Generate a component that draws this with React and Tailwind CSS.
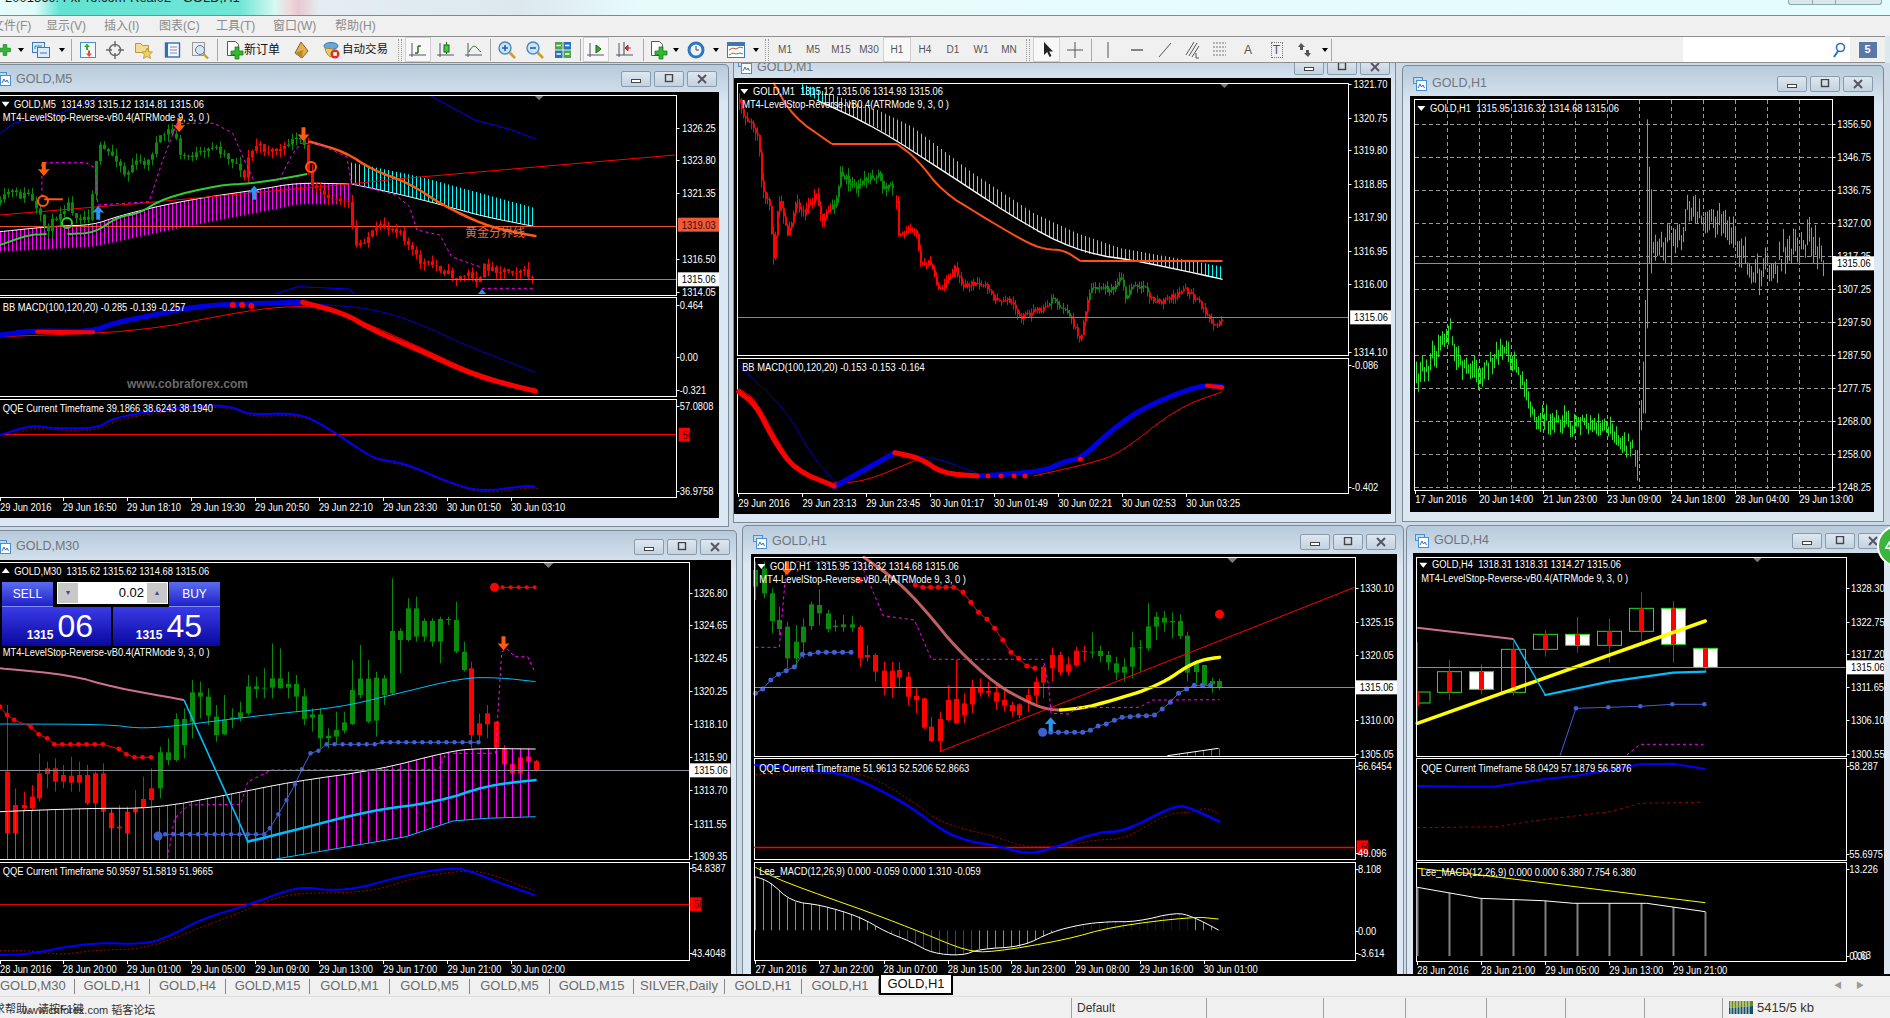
import React from "react";

const SANS = '"Liberation Sans", "Noto Sans CJK SC", Arial, sans-serif';

const rng = (seed) => {
  let s = seed;
  return () => {
    s = (s * 16807) % 2147483647;
    return s / 2147483647;
  };
};

const at = (pts, x) => {
  for (let i = 1; i < pts.length; i++) {
    if (x <= pts[i][0]) {
      const [a, b] = pts[i - 1];
      const [c, d] = pts[i];
      return c === a ? d : b + ((d - b) * (x - a)) / (c - a);
    }
  }
  return pts[pts.length - 1][1];
};

const chaikin = (pts, n = 2) => {
  let p = pts;
  for (let k = 0; k < n; k++) {
    const o = [p[0]];
    for (let i = 0; i < p.length - 1; i++) {
      const [a, b] = p[i];
      const [c, d] = p[i + 1];
      o.push([0.75 * a + 0.25 * c, 0.75 * b + 0.25 * d], [0.25 * a + 0.75 * c, 0.25 * b + 0.75 * d]);
    }
    o.push(p[p.length - 1]);
    p = o;
  }
  return p;
};

const genCandles = (keys, step, seed, noise, color) => {
  const r = rng(seed);
  const out = [];
  let prev = at(keys, keys[0][0]);
  for (let x = keys[0][0]; x <= keys[keys.length - 1][0]; x += step) {
    const c = at(keys, x) + (r() - 0.5) * noise;
    out.push([x, prev, c, Math.min(prev, c) - r() * noise, Math.max(prev, c) + r() * noise, color(x)]);
    prev = c;
  }
  return out;
};

// chart coordinates are taken off the reference crops, pen() maps them to page pixels
function pen(sx, ox, oy) {
  const m = ([x, y]) => [+(ox + x / sx).toFixed(1), +(oy + y / 3).toFixed(1)];
  const X = (x) => Math.round(ox + x / sx) + 0.5;
  const Y = (y) => oy + y / 3;
  const L = (pts, c, w = 1, dash) => (
    <polyline points={pts.map(m).join(" ")} fill="none" stroke={c} strokeWidth={w} strokeDasharray={dash} strokeLinejoin="round" strokeLinecap={w > 2 ? "round" : "butt"} />
  );
  const S = (pts, c, w = 1, dash) => L(chaikin(pts), c, w, dash);
  const Tx = (x, y, str, c = "#fff", s = 11, sc = 0.85) => (
    <text transform={`translate(${ox + x / sx} ${Y(y) + 4}) scale(${sc} 1)`} fill={c} fontSize={s} fontFamily={SANS} className="whitespace-pre">
      {str}
    </text>
  );
  const Frame = (x0, y0, x1, y1) => (
    <rect x={X(x0)} y={Math.round(Y(y0)) + 0.5} width={X(x1) - X(x0)} height={Math.round(Y(y1)) - Math.round(Y(y0))} fill="none" stroke="#fff" />
  );
  const Hl = (x0, x1, y, c, w = 1, dash) => (
    <line x1={ox + x0 / sx} x2={ox + x1 / sx} y1={Math.round(Y(y)) + 0.5} y2={Math.round(Y(y)) + 0.5} stroke={c} strokeWidth={w} strokeDasharray={dash} />
  );
  const Hist = (top, bottom, x0, x1, step, c, w = 1) => {
    const out = [];
    for (let x = x0, i = 0; x <= x1; x += step, i++) {
      const yb = typeof bottom === "number" ? bottom : at(bottom, x);
      out.push(<line key={i} x1={X(x)} x2={X(x)} y1={Y(at(top, x))} y2={Y(yb)} stroke={c} strokeWidth={w} />);
    }
    return out;
  };
  const Candles = (list, bw, color) =>
    list.map(([x, a, b, h, l, col], i) => {
      const c = color || col;
      const t = Math.min(a, b);
      const hgt = Math.max(Math.abs(a - b) / 3, 1);
      return (
        <g key={i}>
          <line x1={X(x)} x2={X(x)} y1={Y(h)} y2={Y(l)} stroke={c} />
          <rect x={Math.round(X(x) - bw / 2)} y={Y(t)} width={bw} height={hgt} fill={c} />
        </g>
      );
    });
  const Dots = (list, c, r = 2.5) => list.map((p, i) => <circle key={i} cx={m(p)[0]} cy={m(p)[1]} r={r} fill={c} />);
  const Arrow = (x, y, c, down) => {
    const [px, py] = m([x, y]);
    return (
      <path
        transform={`translate(${px} ${py}) scale(1 ${down ? -1 : 1})`}
        d="M0 -7 L6 0 L2 -0.5 L2 7 L-2 7 L-2 -0.5 L-6 0 Z"
        fill={c}
      />
    );
  };
  const Axis = (fx, tx, rows) =>
    rows.map(([y, s], i) => (
      <g key={i}>
        <line x1={X(fx)} x2={X(fx) + 3} y1={Math.round(Y(y)) + 0.5} y2={Math.round(Y(y)) + 0.5} stroke="#fff" />
        {Tx(tx, y, s)}
      </g>
    ));
  const Tag = (x0, x1, y, str, bg, c) => (
    <g>
      <rect x={ox + x0 / sx} y={Y(y) - 7} width={(x1 - x0) / sx} height={14} fill={bg} />
      {Tx(x0 + 4 * sx, y, str, c)}
    </g>
  );
  const Times = (xs, labels, fy, ty) =>
    xs.map((x, i) => (
      <g key={i}>
        <line x1={X(x)} x2={X(x)} y1={Math.round(Y(fy))} y2={Math.round(Y(fy)) + 4} stroke="#fff" />
        {Tx(x, ty, labels[i])}
      </g>
    ));
  const Tri = (x, y, c = "#fff", up) => {
    const [px, py] = m([x, y]);
    return <polygon points={up ? `${px - 4},${py + 2} ${px + 4},${py + 2} ${px},${py - 3}` : `${px - 4},${py - 2} ${px + 4},${py - 2} ${px},${py + 3}`} fill={c} />;
  };
  const Shift = (x, y) => {
    const [px, py] = m([x, y]);
    return <polygon points={`${px - 5},${py} ${px + 5},${py} ${px},${py + 5}`} fill="#777b80" />;
  };
  return { m, L, S, Tx, Frame, Hl, Hist, Candles, Dots, Arrow, Axis, Tag, Times, Tri, Shift, X, Y };
}

function ChartM5() {
  const p = pen(2.148, 0, 90);
  const keys = [[0, 340], [20, 300], [40, 320], [60, 310], [80, 370], [100, 420], [120, 380], [145, 340], [165, 380], [190, 380], [212, 170], [230, 185], [250, 205], [270, 260], [285, 220], [320, 215], [330, 170], [360, 120], [385, 150], [385, 200], [440, 190], [455, 165], [480, 190], [515, 230], [525, 270], [530, 210], [550, 165], [570, 180], [610, 180], [620, 155], [650, 150], [660, 210], [665, 270], [700, 310], [750, 345], [755, 400], [765, 470], [790, 440], [820, 410], [860, 420], [875, 460], [900, 515], [940, 530], [980, 565], [1010, 550], [1030, 580], [1040, 530], [1070, 540], [1120, 540], [1150, 572]];
  const col = (x) => (x < 518 ? "#0a8a0a" : x < 615 ? "#ff0000" : x < 655 ? "#0a8a0a" : "#ff0000");
  const blue = [[0, 735], [70, 722], [200, 725], [240, 700], [330, 675], [420, 650], [500, 642], [650, 637]];
  const qq = [[0, 1035], [70, 1005], [110, 1015], [210, 1015], [240, 985], [340, 960], [440, 945], [500, 950], [535, 975], [640, 968], [700, 1010], [780, 1085], [810, 1108], [870, 1120], [960, 1175], [1030, 1205], [1130, 1187], [1150, 1190]];
  return (
    <>
      {p.L([[0, 130], [30, 100], [130, 70], [215, 20]], "#0000ff")}
      {p.L([[925, 18], [1020, 90], [1100, 120], [1150, 147]], "#0000ff")}
      {p.Hist([[0, 425], [120, 408], [200, 405], [250, 380], [350, 345], [450, 320], [550, 300], [640, 278], [750, 282]], [[0, 485], [200, 470], [400, 410], [600, 355], [640, 343], [750, 343]], 0, 750, 8.6, "#ff00ff")}
      {p.S([[0, 425], [120, 408], [200, 405], [250, 380], [350, 345], [450, 320], [550, 300], [640, 278], [750, 282]], "#fff")}
      {p.Hist([[755, 218], [900, 260], [1150, 355]], [[755, 282], [850, 310], [950, 345], [1040, 380], [1150, 410]], 755, 1150, 8.6, "#00ffff")}
      {p.S([[755, 282], [850, 310], [950, 345], [1040, 380], [1150, 410]], "#fff")}
      {p.L([[0, 375], [300, 340], [750, 282], [870, 265], [1450, 195]], "#ff0000")}
      {p.Hl(0, 1452, 407, "#f05030")}
      {p.Candles(genCandles(keys, 8.6, 11, 22, col), 3)}
      {p.S([[0, 465], [60, 435], [100, 432]], "#33cc33", 2)}
      {p.S([[145, 432], [205, 428], [250, 382], [300, 370], [350, 325], [470, 285], [540, 280], [600, 268], [660, 252]], "#33cc33", 2)}
      {p.S([[665, 155], [740, 185], [800, 240], [880, 280], [950, 345], [1040, 405], [1100, 425], [1150, 438]], "#ff5a10", 2.5)}
      {p.L([[90, 320], [90, 218], [185, 218], [205, 235], [210, 345], [320, 335], [350, 210], [380, 100], [460, 100], [500, 130], [520, 195], [545, 270]], "#ff00ff", 1, "3 3")}
      {p.L([[600, 270], [625, 200], [645, 160], [680, 160], [745, 200], [755, 280], [850, 315], [880, 350], [895, 420], [945, 435], [970, 500], [1030, 530]], "#ff00ff", 1, "3 3")}
      {p.L([[1035, 595], [1148, 595]], "#ff00ff", 1, "3 3")}
      {p.L([[95, 328], [135, 328]], "#ff5a10", 2)}
      {p.Arrow(94, 237, "#ff5a10", true)}
      {p.Arrow(385, 105, "#ff5a10", true)}
      {p.Arrow(652, 133, "#ff5a10", true)}
      {p.Arrow(211, 368, "#2a96f0")}
      {p.Arrow(546, 308, "#2a96f0")}
      <circle cx={43} cy={201} r={5} fill="none" stroke="#ff5a10" strokeWidth={2} />
      <circle cx={311} cy={167} r={5} fill="none" stroke="#ff5a10" strokeWidth={2} />
      <circle cx={67} cy={223} r={5} fill="none" stroke="#33cc33" strokeWidth={2} />
      <polygon points="478,294 486,294 482,289" fill="#2a96f0" />
      {p.L([[590, 612], [640, 590], [750, 597], [760, 612]], "#0000ff")}
      {p.Hl(0, 1452, 568, "#808890")}
      <text x={465} y={237} fill="#f06a40" fontSize={12} fontFamily={SANS}>黄金分界线</text>
      {p.Shift(1158, 16)}
      {p.Frame(-4, 15, 1452, 615)}
      {p.Tri(12, 41)}
      {p.Tx(30, 41, "GOLD,M5  1314.93 1315.12 1314.81 1315.06")}
      {p.Tx(6, 80, "MT4-LevelStop-Reverse-vB0.4(ATRMode 9, 3, 0 )")}
      {p.Axis(1452, 1465, [[113, "1326.25"], [210, "1323.80"], [310, "1321.35"], [508, "1316.50"], [607, "1314.05"]])}
      {p.Tag(1456, 1545, 404, "1319.03", "#f0583a", "#3a0a00")}
      {p.Tag(1456, 1545, 568, "1315.06", "#fff", "#000")}

      {p.Frame(-4, 622, 1452, 918)}
      {p.S([[0, 740], [300, 725], [500, 670], [600, 650], [700, 650], [770, 690], [900, 770], [1020, 850], [1150, 900]], "#ff0000")}
      {p.S([[660, 640], [800, 655], [900, 700], [1000, 765], [1100, 820], [1150, 847]], "#0000cc")}
      {p.S(blue, "#0000e0", 5)}
      {p.L([[80, 725], [200, 727]], "#ff0000", 4)}
      {p.S([[650, 637], [740, 670], [800, 720], [900, 780], [1000, 845], [1080, 880], [1150, 903]], "#ff0000", 5)}
      {p.Dots([[500, 645], [520, 645], [540, 648]], "#ff0000", 3)}
      {p.Tx(6, 650, "BB MACD(100,120,20) -0.285 -0.139 -0.257")}
      {p.Axis(1452, 1460, [[644, "0.464"], [800, "0.00"], [899, "-0.321"]])}
      <text x={127} y={388} fill="#6a6a6a" fontSize={12} fontWeight="bold" fontFamily={SANS}>www.cobraforex.com</text>

      {p.Frame(-4, 926, 1452, 1222)}
      {p.Hl(0, 1452, 1033, "#ff0000")}
      {p.S(qq.map(([x, y]) => [x + 6, y + 6]), "#a00000", 1, "2 2")}
      {p.S(qq, "#0000ff", 2)}
      {p.Tx(6, 953, "QQE Current Timeframe 39.1866 38.6243 38.1940")}
      {p.Axis(1452, 1460, [[947, "57.0808"], [1203, "36.9758"]])}
      {p.Tag(1458, 1482, 1034, "50", "#ff0000", "#400")}
      {p.Times([0, 135, 273, 410, 548, 685, 823, 960, 1098], ["29 Jun 2016", "29 Jun 16:50", "29 Jun 18:10", "29 Jun 19:30", "29 Jun 20:50", "29 Jun 22:10", "29 Jun 23:30", "30 Jun 01:50", "30 Jun 03:10"], 1222, 1250)}
    </>
  );
}

function ChartM1() {
  const p = pen(2.306, 730, 60);
  const col = (x) => (x < 235 ? "#ff0000" : x < 381 ? "#0a8a0a" : x < 736 ? "#ff0000" : x < 785 ? "#0a8a0a" : x < 826 ? "#ff0000" : x < 962 ? "#0a8a0a" : "#ff0000");
  const a = [[20, 130], [40, 190], [62, 220], [68, 320], [75, 400], [90, 440], [98, 610], [110, 400], [130, 520], [150, 430], [175, 460], [200, 400], [212, 480], [225, 460], [240, 440], [255, 340], [290, 380], [340, 340], [350, 380], [378, 380]];
  const b = [[382, 430], [384, 520], [410, 510], [430, 520], [435, 610], [460, 610], [475, 680], [490, 680], [520, 620], [535, 680], [560, 670], [590, 675], [610, 720], [655, 725], [665, 775], [690, 760], [730, 745], [740, 710], [780, 760], [790, 790], [808, 840], [820, 750], [830, 680], [880, 690], [900, 650], [910, 710], [930, 670], [960, 690], [965, 710], [990, 725], [1050, 690], [1075, 720], [1100, 770], [1110, 800], [1135, 775]];
  const bandLow = [[200, 120], [340, 205], [500, 340], [700, 510], [820, 580], [950, 605], [1136, 658]];
  return (
    <>
      {p.Hist([[155, 68], [340, 150], [420, 200], [560, 340], [700, 460], [800, 520], [900, 565], [1136, 620]], bandLow, 165, 1136, 9.2, "#00ffff")}
      {p.S(bandLow, "#fff", 1.3)}
      {p.S([[100, 68], [145, 170], [235, 252]], "#ff5010", 2)}
      {p.L([[235, 252], [385, 252]], "#ff5010", 2)}
      {p.S([[385, 252], [430, 295], [490, 395], [570, 460], [680, 545], [725, 568], [770, 570], [808, 603]], "#ff5010", 2)}
      {p.L([[808, 603], [1136, 603]], "#ff5010", 2)}
      {p.Candles(genCandles(a, 4.6, 21, 24, col), 2)}
      {p.Candles(genCandles(b, 4.6, 37, 18, col), 2)}
      {p.Hl(17, 1426, 772, "#808890")}
      {p.Shift(1140, 69)}
      {p.Frame(17, 68, 1426, 885)}
      {p.Tri(33, 93)}
      {p.Tx(53, 92, "GOLD,M1  1315.12 1315.06 1314.93 1315.06")}
      {p.Tx(28, 132, "MT4-LevelStop-Reverse-vB0.4(ATRMode 9, 3, 0 )")}
      {p.Axis(1426, 1438, [[73, "1321.70"], [173, "1320.75"], [271, "1319.80"], [373, "1318.85"], [472, "1317.90"], [574, "1316.95"], [673, "1316.00"], [875, "1314.10"]])}
      {p.Tag(1430, 1525, 772, "1315.06", "#fff", "#000")}

      {p.Frame(17, 893, 1426, 1300)}
      {p.S([[20, 915], [130, 1050], [190, 1190], [245, 1270]], "#0000cc")}
      {p.S([[380, 1180], [480, 1195], [570, 1240]], "#0000cc")}
      {p.S([[20, 985], [60, 1020], [100, 1120], [150, 1225]], "#ff0000")}
      {p.S([[240, 1268], [310, 1265], [430, 1200]], "#ff0000")}
      {p.S([[700, 1248], [830, 1210], [900, 1180], [1030, 1045], [1135, 995]], "#ff0000")}
      {p.L([[240, 1280], [380, 1178]], "#0000e0", 5)}
      {p.S([[570, 1248], [720, 1235], [770, 1205], [810, 1195], [880, 1110], [950, 1045], [1080, 975], [1135, 980]], "#0000e0", 5)}
      {p.S([[20, 995], [60, 1035], [100, 1140], [150, 1230], [240, 1278]], "#ff0000", 5)}
      {p.S([[380, 1178], [440, 1195], [490, 1240], [570, 1248]], "#ff0000", 5)}
      {p.L([[1100, 977], [1135, 982]], "#ff0000", 4)}
      {p.Dots([[595, 1248], [625, 1248], [655, 1248], [680, 1248], [808, 1198]], "#ff0000", 2.5)}
      {p.Tx(28, 920, "BB MACD(100,120,20) -0.153 -0.153 -0.164")}
      {p.Axis(1426, 1434, [[914, "-0.086"], [1280, "-0.402"]])}
      {p.Times([19, 167, 314, 462, 609, 757, 904, 1052], ["29 Jun 2016", "29 Jun 23:13", "29 Jun 23:45", "30 Jun 01:17", "30 Jun 01:49", "30 Jun 02:21", "30 Jun 02:53", "30 Jun 03:25"], 1300, 1328)}
    </>
  );
}

function ChartH1Top() {
  const p = pen(3, 1400, 60);
  const hs = [193, 292, 391, 490, 589, 688, 787, 886, 985, 1084, 1183, 1282];
  const vs = [142, 238, 334, 430, 526, 622, 718, 814, 910, 1006, 1102, 1198];
  const keys = [[47, 960], [100, 890], [150, 800], [165, 900], [200, 930], [240, 950], [310, 860], [340, 910], [375, 1000], [400, 1070], [470, 1080], [540, 1090], [620, 1100], [650, 1130], [700, 1160]];
  const keys2 = [[760, 560], [800, 550], [850, 520], [860, 460], [930, 480], [980, 520], [1010, 550], [1060, 650], [1100, 620], [1130, 640], [1150, 570], [1210, 560], [1222, 520], [1250, 560], [1275, 610]];
  const r = rng(91);
  const bars = [];
  for (let x = 47; x <= 700; x += 6) {
    const y = at(keys, x) + (r() - 0.5) * 40;
    bars.push([x, y - 8 - r() * 28, y + 8 + r() * 28]);
  }
  bars.push([706, 1170, 1220], [712, 1170, 1262], [718, 1050, 1190], [724, 1020, 1110], [730, 905, 1060], [736, 720, 1060], [742, 178, 805], [748, 320, 610], [754, 388, 640]);
  for (let x = 760; x <= 1275; x += 6) {
    const y = at(keys2, x) + (r() - 0.5) * 60;
    bars.push([x, y - 10 - r() * 40, y + 10 + r() * 40]);
  }
  return (
    <>
      {hs.map((y) => (
        <React.Fragment key={y}>{p.Hl(45, 1295, y, "#9a9a9a", 1, "4 3")}</React.Fragment>
      ))}
      {vs.map((x) => (
        <line key={x} x1={p.X(x)} x2={p.X(x)} y1={100} y2={490} stroke="#9a9a9a" strokeDasharray="4 3" />
      ))}
      {bars.map(([x, a, b], i) => (
        <line key={i} x1={p.X(x)} x2={p.X(x)} y1={p.Y(a)} y2={p.Y(b)} stroke="#2adf2a" />
      ))}
      {p.Hl(45, 1295, 610, "#8a8f94")}
      {p.Frame(43, 118, 1295, 1290)}
      {p.Tri(64, 144)}
      {p.Tx(90, 143, "GOLD,H1  1315.95 1316.32 1314.68 1315.06")}
      {p.Axis(1295, 1312, hs.map((y, i) => [y, ["1356.50", "1346.75", "1336.75", "1327.00", "1317.25", "1307.25", "1297.50", "1287.50", "1277.75", "1268.00", "1258.00", "1248.25"][i]]))}
      {p.Tag(1299, 1422, 610, "1315.06", "#fff", "#000")}
      {p.Times([46, 238, 430, 622, 814, 1006, 1198], ["17 Jun 2016", "20 Jun 14:00", "21 Jun 23:00", "23 Jun 09:00", "24 Jun 18:00", "28 Jun 04:00", "29 Jun 13:00"], 1290, 1318)}
    </>
  );
}

function ChartM30() {
  const p = pen(2.119, 0, 525);
  const red = [[15, 740, 925, 540, 930], [32, 840, 925, 790, 925], [50, 840, 850, 800, 860], [67, 815, 850, 780, 860], [83, 745, 820, 685, 830], [100, 730, 747, 710, 790], [117, 730, 770, 700, 800], [134, 750, 770, 720, 790], [151, 752, 773, 695, 800], [168, 750, 773, 710, 800], [185, 750, 835, 720, 840], [202, 745, 835, 740, 860], [219, 745, 860, 715, 870], [236, 863, 910, 860, 912], [253, 905, 910, 840, 915], [270, 860, 925, 845, 930], [287, 850, 862, 795, 865], [304, 822, 850, 755, 860], [321, 790, 825, 730, 850], [999, 430, 630, 410, 670], [1016, 595, 630, 565, 650], [1033, 565, 598, 540, 640], [1050, 590, 668, 590, 670], [1067, 670, 718, 660, 720], [1084, 717, 745, 690, 748], [1101, 697, 745, 695, 748], [1118, 694, 710, 670, 720], [1135, 708, 735, 705, 740]];
  const green = [[338, 682, 790, 665, 820], [355, 682, 705, 640, 720], [372, 582, 705, 565, 710], [389, 582, 660, 550, 700], [406, 502, 590, 465, 640], [423, 502, 515, 470, 580], [440, 515, 572, 490, 600], [457, 575, 630, 540, 650], [474, 584, 628, 510, 630], [491, 577, 583, 550, 610], [508, 562, 578, 530, 590], [525, 484, 565, 450, 570], [542, 484, 492, 455, 520], [559, 488, 490, 430, 520], [576, 460, 488, 355, 520], [593, 460, 490, 370, 490], [610, 477, 488, 440, 520], [627, 477, 515, 450, 560], [644, 514, 582, 490, 600], [661, 568, 578, 550, 620], [678, 568, 640, 550, 670], [695, 632, 640, 610, 670], [712, 615, 635, 560, 660], [729, 592, 617, 560, 625], [746, 495, 597, 405, 600], [763, 461, 510, 360, 520], [780, 461, 590, 405, 595], [797, 458, 587, 440, 635], [814, 460, 510, 450, 540], [831, 318, 505, 160, 510], [848, 318, 345, 310, 445], [865, 250, 345, 220, 350], [882, 250, 335, 215, 350], [899, 288, 335, 280, 350], [916, 288, 350, 280, 365], [933, 282, 350, 275, 415], [950, 282, 285, 275, 300], [967, 285, 380, 230, 385], [984, 380, 435, 350, 440]];
  const top = [[0, 860], [180, 850], [330, 850], [480, 810], [620, 770], [800, 735], [950, 680], [1010, 670], [1135, 672]];
  const bot = [[0, 1002], [585, 1002], [860, 935], [960, 888], [1030, 880], [1135, 875]];
  const small = [];
  for (let x = 1065; x <= 1133; x += 17) small.push([x, 187]);
  const blueA = [];
  for (let x = 350; x <= 560; x += 17.5) blueA.push([x, 928]);
  const blueB = [[572, 910], [590, 868], [607, 825], [625, 778], [640, 733], [658, 685], [675, 677]];
  for (let x = 692; x <= 795; x += 17) blueB.push([x, 658]);
  for (let x = 810; x <= 1030; x += 17) blueB.push([x, 652]);
  const reds = [[0, 545], [15, 570], [30, 585], [65, 605], [82, 628], [100, 640], [115, 658]];
  for (let x = 132; x <= 235; x += 17.2) reds.push([x, 658]);
  reds.push([252, 672], [268, 688], [285, 697], [302, 697], [320, 697]);
  return (
    <>
      {p.Candles(red, 5, "#ff0000")}
      {p.Candles(green, 5, "#0a8a0a")}
      {p.Hist(top, bot, 14, 1135, 17, "#ff00ff")}
      {p.S(top, "#fff")}
      {p.L(bot.slice(1), "#00bfff")}
      {p.S([[0, 597], [230, 598], [290, 610], [360, 605], [560, 570], [720, 547], [830, 510], [980, 458], [1060, 458], [1135, 470]], "#00bfff")}
      {p.S([[0, 430], [150, 450], [240, 487], [390, 525]], "#d07090", 2)}
      {p.L([[390, 525], [525, 950]], "#00bfff", 1.6)}
      {p.S([[525, 950], [640, 910], [780, 858], [930, 830], [1030, 782], [1135, 765]], "#00bfff", 2.5)}
      {p.L([...blueA, ...blueB], "#4060d0")}
      {p.Dots([...blueA, ...blueB], "#4060d0", 2.2)}
      {p.Dots([[335, 933]], "#4060d0", 4.5)}
      {p.L(reds, "#ff0000")}
      {p.Dots(reds, "#ff0000", 2.4)}
      {p.L(small, "#ff0000")}
      {p.Dots(small, "#ff0000", 2)}
      {p.Dots([[1048, 187]], "#ff0000", 4.5)}
      {p.L([[355, 1000], [370, 880], [400, 840], [510, 838], [525, 770], [575, 735], [930, 733], [945, 685], [1050, 685], [1063, 380], [1075, 372], [1090, 395], [1118, 395], [1133, 440]], "#ff00ff", 1, "3 3")}
      {p.Arrow(1067, 355, "#ff5a10", true)}
      {p.Hl(0, 1460, 736, "#8a8f94")}
      {p.Shift(1162, 114)}
      {p.Frame(-4, 112, 1460, 1003)}
      {p.Tri(12, 138, "#fff", true)}
      {p.Tx(30, 137, "GOLD,M30  1315.62 1315.62 1314.68 1315.06")}
      {p.Tx(6, 381, "MT4-LevelStop-Reverse-vB0.4(ATRMode 9, 3, 0 )")}
      {p.Axis(1460, 1470, [[203, "1326.80"], [301, "1324.65"], [400, "1322.45"], [499, "1320.25"], [598, "1318.10"], [697, "1315.90"], [796, "1313.70"], [896, "1311.55"], [994, "1309.35"]])}
      {p.Tag(1462, 1548, 736, "1315.06", "#fff", "#000")}

      {p.Frame(-4, 1010, 1460, 1305)}
      {p.Hl(0, 1460, 1138, "#e00000")}
      {p.S([[0, 1277], [70, 1277], [130, 1290], [200, 1275], [310, 1272], [430, 1205], [540, 1145], [610, 1105], [750, 1103], [810, 1090], [870, 1062], [950, 1042], [1020, 1035], [1133, 1098]], "#a00000", 1, "2 2")}
      {p.S([[0, 1290], [60, 1288], [130, 1268], [210, 1253], [300, 1258], [350, 1240], [430, 1180], [530, 1138], [610, 1095], [650, 1087], [690, 1095], [750, 1093], [860, 1050], [960, 1027], [1000, 1040], [1070, 1080], [1133, 1110]], "#0000ff", 2)}
      {p.Tx(6, 1037, "QQE Current Timeframe 50.9597 51.5819 51.9665")}
      {p.Axis(1460, 1466, [[1030, "54.8387"], [1285, "43.4048"]])}
      {p.Tag(1462, 1487, 1138, "50", "#ff0000", "#400")}
      {p.Times([0, 133, 269, 405, 541, 676, 812, 948, 1083], ["28 Jun 2016", "28 Jun 20:00", "29 Jun 01:00", "29 Jun 05:00", "29 Jun 09:00", "29 Jun 13:00", "29 Jun 17:00", "29 Jun 21:00", "30 Jun 02:00"], 1305, 1333)}
    </>
  );
}

function ChartH1Mid() {
  const p = pen(2.34, 740, 525);
  const green1 = [[36, 135, 185, 110, 225], [55, 130, 205, 110, 220], [74, 205, 288, 190, 325], [92, 285, 312, 245, 330], [111, 305, 400, 290, 430], [130, 350, 400, 300, 425], [148, 305, 352, 280, 400], [167, 238, 303, 230, 315], [186, 240, 265, 192, 300], [205, 265, 312, 255, 322], [223, 302, 306, 285, 320], [242, 298, 306, 270, 320], [261, 298, 308, 272, 320]];
  const red = [[280, 306, 400, 300, 425], [298, 390, 398, 360, 410], [317, 390, 440, 385, 468], [336, 437, 485, 410, 510], [355, 437, 488, 410, 518], [373, 435, 458, 412, 490], [392, 455, 515, 440, 540], [411, 513, 525, 490, 565], [430, 520, 608, 518, 612], [448, 605, 648, 575, 652], [467, 582, 648, 560, 680], [486, 525, 585, 480, 590], [505, 522, 595, 405, 592], [523, 535, 570, 505, 595], [542, 488, 538, 465, 565], [561, 488, 503, 460, 515], [580, 498, 503, 470, 515], [598, 502, 530, 478, 555], [617, 525, 542, 495, 560], [636, 540, 558, 530, 575], [654, 538, 570, 535, 580], [673, 510, 532, 490, 560], [692, 470, 512, 455, 535], [710, 425, 473, 420, 520], [729, 390, 430, 368, 470], [748, 390, 442, 380, 450], [767, 418, 440, 395, 450], [786, 377, 420, 365, 425], [804, 378, 380, 362, 410]];
  const green2 = [[823, 380, 381, 322, 400], [842, 378, 393, 362, 412], [860, 390, 412, 378, 435], [879, 415, 443, 395, 465], [898, 425, 443, 400, 470], [917, 367, 425, 320, 460], [935, 367, 369, 345, 440], [954, 304, 370, 235, 378], [973, 275, 305, 262, 345], [992, 278, 293, 258, 320], [1010, 288, 292, 262, 340], [1029, 288, 333, 268, 342], [1047, 332, 443, 320, 468], [1066, 410, 441, 405, 475], [1085, 420, 480, 420, 490], [1104, 468, 478, 458, 503], [1122, 468, 488, 462, 495]];
  const reds = [[410, 180], [428, 187], [446, 187], [464, 187], [482, 187], [500, 187], [522, 202], [540, 232], [558, 262], [578, 283], [596, 310], [615, 345], [634, 382], [652, 400], [671, 423], [690, 430]];
  const blueA = [[36, 505], [53, 492], [72, 465], [90, 448], [108, 437], [127, 426], [146, 388], [164, 387], [183, 382], [202, 382], [221, 382], [240, 382], [260, 382]];
  const blueB = [[727, 622], [745, 622], [764, 622], [783, 622], [802, 622], [820, 616], [838, 603], [857, 597], [876, 586], [894, 577], [913, 575], [932, 572], [951, 572], [970, 570], [988, 552], [1007, 532], [1026, 505], [1045, 492], [1063, 481], [1082, 481], [1101, 481]];
  const macdW = [[36, 1055], [70, 1070], [120, 1130], [190, 1140], [280, 1175], [340, 1220], [400, 1250], [450, 1285], [520, 1292], [560, 1272], [660, 1265], [730, 1220], [800, 1198], [860, 1190], [930, 1190], [1020, 1162], [1060, 1175], [1120, 1215]];
  const hist = [];
  for (let i = 0, x = 36; x <= 1122; x += 18.72, i++) {
    const c = x < 322 ? "#8a8a8a" : x < 545 ? "#e00000" : x < 730 ? "#8a8a8a" : x < 780 ? "#000" : x < 1050 ? "#0000e0" : "#8a8a8a";
    hist.push(<line key={i} x1={p.X(x)} x2={p.X(x)} y1={p.Y(1216)} y2={p.Y(at(macdW, x))} stroke={c} />);
  }
  return (
    <>
      {p.Candles(green1, 5, "#0a8a0a")}
      {p.Candles(red, 5, "#ff0000")}
      {p.Candles(green2, 5, "#0a8a0a")}
      {p.L([[467, 680], [1438, 187]], "#ff0000")}
      {p.S([[290, 97], [370, 170], [430, 250], [510, 375], [600, 480], [680, 535], [720, 553], [750, 555]], "#c06060", 3)}
      {p.S([[750, 555], [810, 548], [900, 515], [945, 497], [1000, 465], [1045, 425], [1080, 405], [1122, 397]], "#ffff00", 3.4)}
      {p.L(reds, "#ff0000")}
      {p.Dots(reds, "#ff0000", 2.5)}
      {p.Dots([[280, 165]], "#ff0000", 3)}
      {p.Dots([[1122, 268]], "#ff0000", 4.5)}
      {p.L(blueA, "#4060d0")}
      {p.Dots(blueA, "#4060d0", 2.5)}
      {p.L(blueB, "#4060d0")}
      {p.Dots(blueB, "#4060d0", 2.5)}
      {p.Dots([[708, 622]], "#4060d0", 4.5)}
      {p.L([[36, 367], [92, 367], [108, 130], [108, 110], [280, 110], [300, 165], [335, 272], [408, 285], [448, 403], [710, 403], [722, 480], [728, 565], [770, 567], [790, 548], [935, 547], [965, 525], [1122, 524]], "#ff00ff", 1, "3 3")}
      {p.Arrow(110, 130, "#ff5a10", true)}
      {p.Arrow(727, 598, "#2a96f0")}
      {p.Hist([[1000, 692], [1120, 670]], 692, 1028, 1122, 18.7, "#ff00ff")}
      {p.L([[1000, 692], [1120, 670]], "#fff")}
      {p.Hl(33, 1438, 487, "#8a8f94")}
      {p.Shift(1152, 99)}
      {p.Frame(33, 97, 1438, 693)}
      {p.Tri(50, 123)}
      {p.Tx(70, 122, "GOLD,H1  1315.95 1316.32 1314.68 1315.06")}
      {p.Tx(45, 161, "MT4-LevelStop-Reverse-vB0.4(ATRMode 9, 3, 0 )")}
      {p.Axis(1438, 1451, [[190, "1330.10"], [290, "1325.15"], [389, "1320.05"], [586, "1310.00"], [686, "1305.05"]])}
      {p.Tag(1441, 1538, 487, "1315.06", "#fff", "#000")}

      {p.Frame(33, 700, 1438, 1002)}
      {p.S([[36, 748], [240, 745], [300, 750], [400, 825], [470, 895], [600, 935], [660, 965], [750, 965], [840, 943], [900, 943], [1000, 865], [1060, 862], [1090, 847], [1122, 868]], "#a00000", 1, "2 2")}
      {p.Hl(33, 1438, 967, "#ff0000", 1.5)}
      {p.S([[36, 720], [220, 740], [290, 770], [400, 845], [470, 915], [530, 948], [600, 962], [670, 987], [720, 975], [840, 920], [900, 920], [1020, 838], [1060, 852], [1122, 890]], "#0000ff", 2.4)}
      {p.Tx(45, 729, "QQE Current Timeframe 51.9613 52.5206 52.8663")}
      {p.Tag(1443, 1470, 967, "50", "#ff0000", "#400")}
      {p.Axis(1438, 1446, [[722, "56.6454"], [983, "49.096"]])}

      {p.Frame(33, 1010, 1438, 1305)}
      {hist}
      {p.S(macdW, "#fff")}
      {p.S([[36, 1027], [100, 1070], [310, 1165], [430, 1225], [530, 1278], [590, 1282], [760, 1245], [870, 1205], [1060, 1175], [1120, 1182]], "#ffff00")}
      {p.Tx(45, 1037, "Lee_MACD(12,26,9) 0.000 -0.059 0.000 1.310 -0.059")}
      {p.Axis(1438, 1446, [[1031, "8.108"], [1217, "0.00"], [1285, "-3.614"]])}
      {p.Times([36, 186, 336, 486, 635, 785, 935, 1085], ["27 Jun 2016", "27 Jun 22:00", "28 Jun 07:00", "28 Jun 15:00", "28 Jun 23:00", "29 Jun 08:00", "29 Jun 16:00", "30 Jun 01:00"], 1305, 1333)}
    </>
  );
}

function ChartH4() {
  const p = pen(3, 1400, 525);
  const cs = [[148, 440, 502, 405, 525, 0], [244, 440, 493, 418, 508, 1], [340, 373, 502, 350, 512, 0], [436, 328, 373, 315, 395, 0], [532, 328, 361, 276, 383, 1], [628, 319, 361, 280, 413, 0], [724, 250, 319, 202, 348, 0], [820, 250, 358, 228, 413, 1], [916, 370, 427, 370, 437, 1]];
  const dots = [[528, 550], [625, 547], [721, 544], [817, 538], [913, 538]];
  const xs = [52, 148, 244, 340, 436, 532, 628, 724, 820, 916];
  const macdW = [[52, 1087], [240, 1120], [430, 1127], [520, 1135], [740, 1135], [916, 1160]];
  return (
    <>
      <rect x={1418} y={692} width={12} height={11} fill="#000" stroke="#22e022" />
      <line x1={1417.5} x2={1417.5} y1={642} y2={722} stroke="#ff0000" />
      <rect x={1416} y={692} width={3} height={14} fill="#ff0000" />
      {cs.map(([x, a, b, h, l, w], i) => (
        <g key={i}>
          <rect x={p.X(x) - 12} y={p.Y(a)} width={24} height={(b - a) / 3} fill={w ? "#fff" : "#000"} stroke="#22e022" />
          <rect x={p.X(x) - 2.5} y={p.Y(a)} width={5} height={(b - a) / 3} fill="#ff0000" />
          <line x1={p.X(x)} x2={p.X(x)} y1={p.Y(h)} y2={p.Y(l)} stroke="#ff0000" />
        </g>
      ))}
      {p.L([[52, 595], [916, 288]], "#ffff00", 3.5)}
      {p.L([[52, 308], [340, 342]], "#d07090", 2)}
      {p.L([[340, 342], [436, 510]], "#00bfff", 1.5)}
      {p.L([[436, 510], [628, 470], [820, 443], [916, 440]], "#00bfff", 2.2)}
      {p.L([[480, 692], [528, 550], [625, 547], [721, 544], [817, 538], [913, 538]], "#4060d0")}
      {p.Dots(dots, "#4060d0", 2.3)}
      {p.L([[680, 690], [720, 658], [910, 658]], "#ff00ff", 1, "3 3")}
      {p.Hl(52, 1337, 427, "#8a8f94")}
      {p.Shift(1072, 97)}
      {p.Frame(49, 95, 1337, 693)}
      {p.Tri(70, 119)}
      {p.Tx(96, 118, "GOLD,H4  1318.31 1318.31 1314.27 1315.06")}
      {p.Tx(64, 158, "MT4-LevelStop-Reverse-vB0.4(ATRMode 9, 3, 0 )")}
      {p.Axis(1337, 1353, [[190, "1328.30"], [290, "1322.75"], [388, "1317.20"], [487, "1311.65"], [586, "1306.10"], [686, "1300.55"]])}
      {p.Tag(1341, 1452, 427, "1315.06", "#fff", "#000")}

      {p.Frame(49, 700, 1337, 1005)}
      {p.L([[52, 908], [290, 905], [400, 888], [630, 860], [720, 835], [910, 832]], "#a00000", 1, "3 3")}
      {p.L([[52, 783], [200, 785], [280, 785], [430, 763], [530, 752], [720, 718], [820, 716], [916, 732]], "#0000ff", 2)}
      {p.Tx(64, 728, "QQE Current Timeframe 58.0429 57.1879 56.5876")}
      {p.Axis(1337, 1348, [[722, "58.287"], [986, "55.6975"]])}

      {p.Frame(49, 1012, 1337, 1308)}
      {xs.map((x) => (
        <line key={x} x1={p.X(x)} x2={p.X(x)} y1={p.Y(at(macdW, x))} y2={p.Y(1293)} stroke="#808080" strokeWidth={2} />
      ))}
      {p.L(macdW, "#fff")}
      {p.L([[52, 1030], [200, 1045], [916, 1133]], "#ffff00")}
      {p.Tx(62, 1040, "Lee_MACD(12,26,9) 0.000 0.000 6.380 7.754 6.380")}
      {p.Axis(1337, 1348, [[1033, "13.226"], [1293, "0.00"]])}
      {p.Tx(1358, 1290, "0.63")}
      {p.Times([52, 244, 436, 628, 820], ["28 Jun 2016", "28 Jun 21:00", "29 Jun 05:00", "29 Jun 13:00", "29 Jun 21:00"], 1308, 1336)}
    </>
  );
}

function TradePanel() {
  return (
    <div className="absolute left-[2px] top-[22px] grid w-[218px] grid-cols-[51px_4px_111px_1px_51px] grid-rows-[25px_39px] text-white" style={{ fontFamily: SANS }}>
      <div className="col-start-1 row-start-1 flex items-center justify-center border-b border-[#8090ff] bg-[linear-gradient(#5a6cf0,#2020c8)] text-[12px]">SELL</div>
      <div className="col-start-3 row-start-1 flex h-[22px] items-stretch border border-white bg-white text-[13px] text-black">
        <div className="flex w-[20px] items-center justify-center bg-[#c8c8c8] text-[7px] text-[#3a4a8a]">▼</div>
        <div className="flex flex-1 items-center justify-end pr-[3px]">0.02</div>
        <div className="flex w-[20px] items-center justify-center bg-[#c8c8c8] text-[7px] text-[#3a4a8a]">▲</div>
      </div>
      <div className="col-start-5 row-start-1 flex items-center justify-center border-b border-[#8090ff] bg-[linear-gradient(#5a6cf0,#2020c8)] text-[12px]">BUY</div>
      <div className="col-span-5 row-start-2 flex gap-[2px]">
        <div className="flex w-[109px] items-end justify-end gap-[4px] bg-[linear-gradient(#3a3ae8,#0808a0)] pr-[18px] pb-[2px]">
          <span className="mb-[3px] text-[12px] font-bold leading-none">1315</span>
          <span className="text-[32px] leading-[36px]">06</span>
        </div>
        <div className="flex w-[107px] items-end justify-end gap-[4px] bg-[linear-gradient(#3a3ae8,#0808a0)] pr-[18px] pb-[2px]">
          <span className="mb-[3px] text-[12px] font-bold leading-none">1315</span>
          <span className="text-[32px] leading-[36px]">45</span>
        </div>
      </div>
    </div>
  );
}

function WinIcon() {
  return (
    <svg width="14" height="14" viewBox="0 0 14 14" className="shrink-0">
      <rect x="0.5" y="0.5" width="9" height="6" fill="#b8dcf8" stroke="#4a90d0" />
      <rect x="3.5" y="3.5" width="10" height="10" fill="#fff" stroke="#4a90d0" />
      <path d="M5 11l2-4 1.5 3 1.5-2 1.5 3" fill="none" stroke="#3070c0" />
    </svg>
  );
}

function WinBtn({ kind }) {
  return (
    <div className="flex h-[16px] w-[30px] items-center justify-center rounded-[2px] border border-[#8a9bab] bg-[linear-gradient(#dde7f0,#c4d2df)]">
      <svg width="12" height="10" viewBox="0 0 12 10">
        {kind === "min" && <rect x="1.5" y="5.5" width="9" height="3" fill="#fff" stroke="#444" />}
        {kind === "max" && <rect x="2.5" y="0.5" width="7" height="7" fill="none" stroke="#444" strokeWidth="1.4" />}
        {kind === "x" && <path d="M2 1l8 8M10 1l-8 8" stroke="#556" strokeWidth="2" />}
      </svg>
    </div>
  );
}

function Win({ cls, bar, ml, view, title, children, overlay }) {
  const [vx, vy, vw, vh] = view;
  return (
    <div className={`absolute rounded-t-[5px] bg-[linear-gradient(#b7c9da,#dbe7f2_40px)] shadow-[inset_0_0_0_1px_#7b8a99] ${cls}`}>
      <div className={`flex items-center ${bar}`}>
        <WinIcon />
        <span className="ml-[5px] flex-1 text-[12.5px] text-[#6f757b]" style={{ fontFamily: SANS }}>{title}</span>
        <div className="flex gap-[3px]">
          <WinBtn kind="min" />
          <WinBtn kind="max" />
          <WinBtn kind="x" />
        </div>
      </div>
      <div className={`relative w-fit bg-black ${ml}`}>
        <svg width={vw} height={vh} viewBox={`${vx} ${vy} ${vw} ${vh}`} className="block">
          {children}
        </svg>
        {overlay}
      </div>
    </div>
  );
}

const Dd = ({ w }) => (
  <div className={`flex items-center justify-center ${w}`}>
    <div className="h-0 w-0 border-x-[3px] border-t-[4px] border-x-transparent border-t-black" />
  </div>
);
const Sep = ({ w }) => (
  <div className={`flex h-[22px] items-center justify-center ${w}`}>
    <div className="h-full w-px bg-[#a8a8a8]" />
  </div>
);
const Grip = ({ w }) => (
  <div className={`flex h-[22px] items-center justify-center ${w}`}>
    <div className="h-full w-[4px] border-x border-dotted border-[#999]" />
  </div>
);
const Tb = ({ w, on, children }) => (
  <div className={`flex h-[25px] items-center justify-center ${w} ${on ? "border border-[#d0d0d0] bg-[#f8f8f8]" : ""}`}>{children}</div>
);
const Svg = ({ children }) => (
  <svg width="20" height="20" viewBox="0 0 20 20">{children}</svg>
);
const Axes = () => <path d="M4 3v14M1 15h17" stroke="#556" fill="none" />;
const Plus = ({ x = 8, y = 8 }) => (
  <path transform={`translate(${x} ${y})`} d="M4 0h4v4h4v4H8v4H4V8H0V4h4z" fill="#33b833" stroke="#0e6e0e" strokeWidth="0.7" />
);
const Doc = () => <path d="M3.5 1.5h8l3 3v11h-11z" fill="#fff" stroke="#555" />;

function Ticks() {
  return ["M1", "M5", "M15", "M30", "H1", "H4", "D1", "W1", "MN"].map((t) => (
    <Tb key={t} w="w-[28px]" on={t === "H1"}>
      <span className="text-[10px] text-[#555]">{t}</span>
    </Tb>
  ));
}

function Toolbar() {
  return (
    <div className="flex h-[27px] w-full items-center border-y border-[#8f8f8f] bg-[#f0f0f0]" style={{ fontFamily: SANS }}>
      <div className="-ml-[4px] flex items-center">
        <Tb w="w-[18px]"><Svg><Plus x={4} y={4} /></Svg></Tb>
        <Dd w="w-[13px]" />
        <Tb w="w-[28px]">
          <Svg>
            <rect x="1.5" y="2.5" width="12" height="10" fill="#dcecfa" stroke="#3c78b4" />
            <rect x="6.5" y="7.5" width="12" height="10" fill="#dcecfa" stroke="#3c78b4" />
            <path d="M4 6h7M9 13h7M4 6v3" stroke="#3c78b4" fill="none" />
          </Svg>
        </Tb>
        <Dd w="w-[13px]" />
        <Sep w="w-[7px]" />
        <Tb w="w-[26px]">
          <Svg>
            <rect x="2.5" y="2.5" width="15" height="15" fill="#f4f8fc" stroke="#4c8ccc" />
            <path d="M9 3.5l3 3.5H10v3H8V7H6z" fill="#33b033" />
            <path d="M11 17l-3-3.5h2v-3h2v3h2z" fill="#e05030" />
          </Svg>
        </Tb>
        <Tb w="w-[28px]">
          <Svg>
            <circle cx="10" cy="10" r="5.5" fill="none" stroke="#666" strokeWidth="1.4" />
            <path d="M10 1v6M10 13v6M1 10h6M13 10h6" stroke="#666" strokeWidth="1.4" />
          </Svg>
        </Tb>
        <Tb w="w-[29px]">
          <Svg>
            <path d="M1.5 3.5h5l2 2h6v7h-13z" fill="#f4dc90" stroke="#b89848" />
            <path d="M13 8l1.7 3.6 3.8.4-2.8 2.6.8 3.9-3.5-2-3.5 2 .8-3.9L8 12l3.8-.4z" fill="#f0d060" stroke="#a88830" strokeWidth="0.7" />
          </Svg>
        </Tb>
        <Tb w="w-[28px]">
          <Svg>
            <rect x="3.5" y="3" width="14" height="14" fill="#f4f8fc" stroke="#2c70b8" strokeWidth="1.4" />
            <rect x="3" y="3" width="3" height="14" fill="#2c70b8" />
            <path d="M8 7h7M8 10h7M8 13h7" stroke="#88a" />
          </Svg>
        </Tb>
        <Tb w="w-[28px]">
          <Svg>
            <rect x="2.5" y="2.5" width="12" height="13" fill="#eee" stroke="#999" />
            <circle cx="10" cy="10" r="4.5" fill="#d0e8f8" stroke="#678" />
            <path d="M13 13.5l5 5" stroke="#c8a030" strokeWidth="2.4" />
          </Svg>
        </Tb>
        <Sep w="w-[7px]" />
        <div className="flex w-[67px] items-center pl-[3px]">
          <Svg><Doc /><Plus x={7} y={7} /></Svg>
          <span className="text-[12px] text-[#111]">新订单</span>
        </div>
        <Tb w="w-[28px]">
          <Svg>
            <path d="M9 2l7 9-6 7-7-5z" fill="#e0b050" stroke="#8a6420" />
            <path d="M3 13l7 5 1-8z" fill="#b88830" />
          </Svg>
        </Tb>
        <div className="flex w-[78px] items-center pl-[5px]">
          <Svg>
            <ellipse cx="10" cy="6" rx="7" ry="3.5" fill="#68a8d8" stroke="#3a78a8" />
            <path d="M4 8c1 6 4 9 7 9l2-8z" fill="#e8c868" stroke="#a88838" />
            <circle cx="14" cy="14" r="4.5" fill="#e03020" />
            <rect x="12.2" y="12.2" width="3.6" height="3.6" fill="#fff" />
          </Svg>
          <span className="ml-[1px] text-[11.5px] text-[#111]">自动交易</span>
        </div>
        <Grip w="w-[11px]" />
        <Tb w="w-[26px]" on>
          <Svg><Axes /><path d="M10 13V6M7 13h3M10 6h3" stroke="#287028" strokeWidth="1.5" fill="none" /></Svg>
        </Tb>
        <Tb w="w-[29px]">
          <Svg><Axes /><rect x="8" y="5" width="5" height="7" fill="#44cc44" stroke="#186018" /><path d="M10.5 2v3M10.5 12v2" stroke="#186018" /></Svg>
        </Tb>
        <Tb w="w-[28px]">
          <Svg><Axes /><path d="M5 12c2-5 5-7 7-5 2 1 2 3 5 5" stroke="#287028" fill="none" /></Svg>
        </Tb>
        <Sep w="w-[5px]" />
        <Tb w="w-[28px]">
          <Svg>
            <circle cx="8" cy="8" r="6" fill="#c8e4f8" stroke="#4888c0" strokeWidth="1.4" />
            <path d="M8 5v6M5 8h6" stroke="#2860a0" strokeWidth="1.6" />
            <path d="M12.5 12.5l5.5 5.5" stroke="#c8a030" strokeWidth="2.6" />
          </Svg>
        </Tb>
        <Tb w="w-[28px]">
          <Svg>
            <circle cx="8" cy="8" r="6" fill="#c8e4f8" stroke="#4888c0" strokeWidth="1.4" />
            <path d="M5 8h6" stroke="#2860a0" strokeWidth="1.6" />
            <path d="M12.5 12.5l5.5 5.5" stroke="#c8a030" strokeWidth="2.6" />
          </Svg>
        </Tb>
        <Tb w="w-[28px]">
          <Svg>
            <rect x="2" y="2" width="7.5" height="7.5" fill="#48a848" />
            <rect x="10.5" y="2" width="7.5" height="7.5" fill="#2c70c0" />
            <rect x="2" y="10.5" width="7.5" height="7.5" fill="#2c70c0" />
            <rect x="10.5" y="10.5" width="7.5" height="7.5" fill="#48a848" />
            <path d="M3.5 5.5h4.5M12 5.5h4.5M3.5 14h4.5M12 14h4.5" stroke="#fff" strokeWidth="1.6" />
          </Svg>
        </Tb>
        <Sep w="w-[6px]" />
        <Tb w="w-[26px]" on>
          <Svg><Axes /><path d="M10 5l5 4-5 4z" fill="#33aa33" stroke="#186018" /></Svg>
        </Tb>
        <Tb w="w-[31px]">
          <Svg><Axes /><path d="M9 2v13" stroke="#444" /><path d="M16 8l-5 0M13 5l-3 3 3 3z" fill="#c03020" stroke="#c03020" /></Svg>
        </Tb>
        <Sep w="w-[6px]" />
        <Tb w="w-[24px]"><Svg><Doc /><Plus x={7} y={7} /></Svg></Tb>
        <Dd w="w-[12px]" />
        <Tb w="w-[28px]">
          <Svg>
            <circle cx="10" cy="10" r="8.5" fill="#2c78c0" />
            <circle cx="10" cy="10" r="5.5" fill="#eef4f8" />
            <path d="M10 6v4h3" stroke="#444" fill="none" />
          </Svg>
        </Tb>
        <Dd w="w-[12px]" />
        <Tb w="w-[28px]">
          <Svg>
            <rect x="1.5" y="2.5" width="17" height="15" fill="#fff" stroke="#3c78b4" />
            <rect x="2" y="3" width="16" height="3" fill="#3c78b4" />
            <path d="M3 10l4-2 3 1 4-2 3 1" stroke="#c05030" fill="none" />
            <path d="M3 15l4-2 3 1 4-1 3 1" stroke="#38a038" fill="none" />
          </Svg>
        </Tb>
        <Dd w="w-[12px]" />
        <Grip w="w-[9px]" />
        <Ticks />
        <Grip w="w-[10px]" />
        <Tb w="w-[27px]" on>
          <Svg><path d="M7 2v13l3.2-3 2.3 5 2-1-2.3-4.6H16z" fill="#222" /></Svg>
        </Tb>
        <Tb w="w-[29px]">
          <Svg><path d="M10 2v16M2 10h16" stroke="#555" /></Svg>
        </Tb>
        <Sep w="w-[5px]" />
        <Tb w="w-[28px]"><Svg><path d="M10 2v16" stroke="#555" /></Svg></Tb>
        <Tb w="w-[29px]"><Svg><path d="M4 10h12" stroke="#555" strokeWidth="1.4" /></Svg></Tb>
        <Tb w="w-[28px]"><Svg><path d="M4 17L16 3" stroke="#555" /></Svg></Tb>
        <Tb w="w-[27px]">
          <Svg><path d="M3 15L11 2M6 16L14 3M9 17L16 6" stroke="#555" /><path d="M13 13v5h3" stroke="#555" fill="none" /></Svg>
        </Tb>
        <Tb w="w-[28px]"><Svg><path d="M3 3h13M3 7h13M3 11h13M3 15h13" stroke="#777" strokeDasharray="2 1" /></Svg></Tb>
        <Tb w="w-[28px]"><span className="text-[12px] text-[#555]">A</span></Tb>
        <Tb w="w-[29px]">
          <div className="flex h-[16px] w-[12px] items-center justify-center border border-dotted border-[#777] text-[12px] text-[#555]">T</div>
        </Tb>
        <Tb w="w-[28px]"><Svg><path d="M6 3l4 4H8v3H5V7H3zM13 17l-4-4h2v-3h3v3h2z" fill="#555" /></Svg></Tb>
        <Dd w="w-[12px]" />
        <Sep w="w-[1px]" />
      </div>
      <div className="flex-1" />
      <div className="flex h-[25px] w-[167px] items-center justify-end bg-white pr-[4px]">
        <svg width="14" height="16" viewBox="0 0 14 16">
          <circle cx="8.5" cy="5.5" r="4" fill="none" stroke="#2c70c0" strokeWidth="1.6" />
          <path d="M6 9l-4 6" stroke="#2c70c0" strokeWidth="2" />
        </svg>
      </div>
      <div className="flex w-[35px] justify-center">
        <div className="flex h-[16px] w-[18px] items-center justify-center bg-[#5878a8] text-[11px] font-bold text-white">5</div>
      </div>
      <div className="h-[27px] w-[5px] bg-[#dbe9ee]" />
    </div>
  );
}

const MENUS = [
  ["文件(F)", "w-[55px] pl-[1px]"],
  ["显示(V)", "w-[58px] pl-[0px]"],
  ["插入(I)", "w-[55px]"],
  ["图表(C)", "w-[57px]"],
  ["工具(T)", "w-[57px]"],
  ["窗口(W)", "w-[62px]"],
  ["帮助(H)", "w-[50px]"],
];

const TABS = [
  ["GOLD,M30", "w-[75px] justify-start"],
  ["GOLD,H1", "w-[75px] justify-center"],
  ["GOLD,H4", "w-[76px] justify-center"],
  ["GOLD,M15", "w-[84px] justify-center"],
  ["GOLD,M1", "w-[80px] justify-center"],
  ["GOLD,M5", "w-[80px] justify-center"],
  ["GOLD,M5", "w-[80px] justify-center"],
  ["GOLD,M15", "w-[84px] justify-center"],
  ["SILVER,Daily", "w-[91px] justify-center"],
  ["GOLD,H1", "w-[77px] justify-center"],
  ["GOLD,H1", "w-[77px] justify-center"],
];

const STATUS_GAPS = ["w-[135px]", "w-[117px]", "w-[82px]", "w-[81px]", "w-[79px]", "w-[79px]", "w-[78px]"];

export default function App() {
  return (
    <div className="flex h-[1018px] w-[1890px] flex-col overflow-hidden bg-[#f0f0f0]" style={{ fontFamily: SANS }}>
      {/* aero caption, only the lower edge of the text is on screen */}
      <div className="relative h-[15px] w-full overflow-hidden bg-[linear-gradient(90deg,#e6fbfb_0,#e0faf8_35px,#62e2d2_60px,#6fe6d6_240px,#d8f8f4_275px,#f0d8dc_290px,#e8c8d0_298px,#e4eef2_320px,#dce8ee_520px,#e8fbfb_640px,#e4fcfc_1890px)]">
        <span className="absolute left-[5px] top-[-10px] whitespace-nowrap text-[13px] leading-[16px] text-[#1a1a1a]">2001369: FxPro.com-Real02 - GOLD,H1</span>
        <div className="absolute right-[8px] top-0 flex h-[5px] w-[94px] rounded-b-[3px] border border-t-0 border-[#8aa] bg-[#dbe6ea]">
          <div className="flex-1 border-r border-[#8aa]" />
          <div className="flex-1 border-r border-[#8aa]" />
          <div className="flex-[2]" />
        </div>
      </div>
      <div className="flex h-[21px] w-full items-center border-t border-[#888] bg-[#f0f0f0]">
        <div className="-ml-[9px] flex">
          {MENUS.map(([t, w]) => (
            <span key={t} className={`text-[12px] text-[#8b8b8b] ${w}`}>{t}</span>
          ))}
        </div>
      </div>
      <Toolbar />

      <div className="relative h-[911px] w-full overflow-hidden bg-[#cddae6]">
        <Win cls="left-[-8px] top-[1px] h-[463px] w-[737px]" bar="h-[28px] pl-[5px] pr-[12px] pt-[2px]" ml="ml-[8px]" view={[0, 92, 719, 426]} title="GOLD,M5">
          <ChartM5 />
        </Win>
        <Win cls="left-[733px] top-[-19px] h-[479px] w-[663px]" bar="h-[34px] pl-[5px] pr-[6px] pt-[12px]" ml="ml-[1px]" view={[734, 78, 657, 436]} title="GOLD,M1">
          <ChartM1 />
        </Win>
        <Win cls="left-[1402px] top-[2px] h-[457px] w-[482px]" bar="h-[31px] pl-[11px] pr-[11px] pt-[6px]" ml="ml-[8px]" view={[1410, 96, 464, 416]} title="GOLD,H1">
          <ChartH1Top />
        </Win>
        <Win cls="left-[-8px] top-[467px] h-[450px] w-[745px]" bar="h-[30px] pl-[5px] pr-[7px] pt-[3px]" ml="ml-[8px]" view={[0, 560, 731, 414]} title="GOLD,M30" overlay={<TradePanel />}>
          <ChartM30 />
        </Win>
        <Win cls="left-[742px] top-[462px] h-[460px] w-[662px]" bar="h-[29px] pl-[11px] pr-[8px] pt-[4px]" ml="ml-[9px]" view={[751, 554, 646, 420]} title="GOLD,H1">
          <ChartH1Mid />
        </Win>
        <Win cls="left-[1406px] top-[462px] h-[460px] w-[494px]" bar="h-[28px] pl-[9px] pr-[12px] pt-[3px]" ml="ml-[7px]" view={[1413, 553, 471, 421]} title="GOLD,H4">
          <ChartH4 />
        </Win>
        <div className="absolute left-[1877px] top-[462px] flex h-[42px] w-[42px] items-center justify-start rounded-full border-2 border-white bg-[#3cb43c] pl-[6px] text-[14px] font-bold text-white">
          4
        </div>
      </div>

      <div className="flex h-[22px] w-full items-center border-t-2 border-black bg-[#f0f0f0]">
        {TABS.map(([t, w], i) => (
          <div key={i} className={`flex h-[15px] items-center border-r border-[#888] text-[13px] text-[#6a6a6a] ${w}`}>{t}</div>
        ))}
        <div className="-mt-[3px] flex h-[20px] w-[74px] items-center justify-center border-x-2 border-b-2 border-black bg-white text-[13px] text-[#111]">GOLD,H1</div>
        <div className="flex-1" />
        <div className="flex w-[26px] items-center gap-[14px] pr-0 text-[8px] text-[#999]">
          <span>◀</span>
          <span>▶</span>
        </div>
        <div className="w-[30px]" />
      </div>

      <div className="relative flex h-[22px] w-full items-center border-t border-[#ddd] bg-[#f0f0f0] text-[11px] text-[#222]">
        <span className="absolute left-[-6px] top-[4px] whitespace-nowrap text-[#333]">求帮助，请按F1键</span>
        <span className="absolute left-[22px] top-[5px] whitespace-nowrap text-[#333]">www.cnforex.com 韬客论坛</span>
        <div className="w-[1071px]" />
        {STATUS_GAPS.map((w, i) => (
          <div key={i} className={`flex h-[20px] items-center border-l border-[#a0a0a0] ${w}`}>
            {i === 0 && <span className="pl-[5px] text-[12px] text-[#333]">Default</span>}
          </div>
        ))}
        <div className="flex h-[20px] items-center gap-[4px] border-l border-[#a0a0a0] pl-[6px] text-[13px] text-[#333]">
          <svg width="24" height="13" viewBox="0 0 24 13">
            <path d="M0 0h24v5L0 7z" fill="#6a8a10" />
            <path d="M0 7l24-2v8H0z" fill="#13506a" />
            <path d="M2 0v13M5 0v13M8 0v13M11 0v13M14 0v13M17 0v13M20 0v13" stroke="#f0f0f0" />
          </svg>
          <span>5415/5 kb</span>
        </div>
      </div>
    </div>
  );
}
